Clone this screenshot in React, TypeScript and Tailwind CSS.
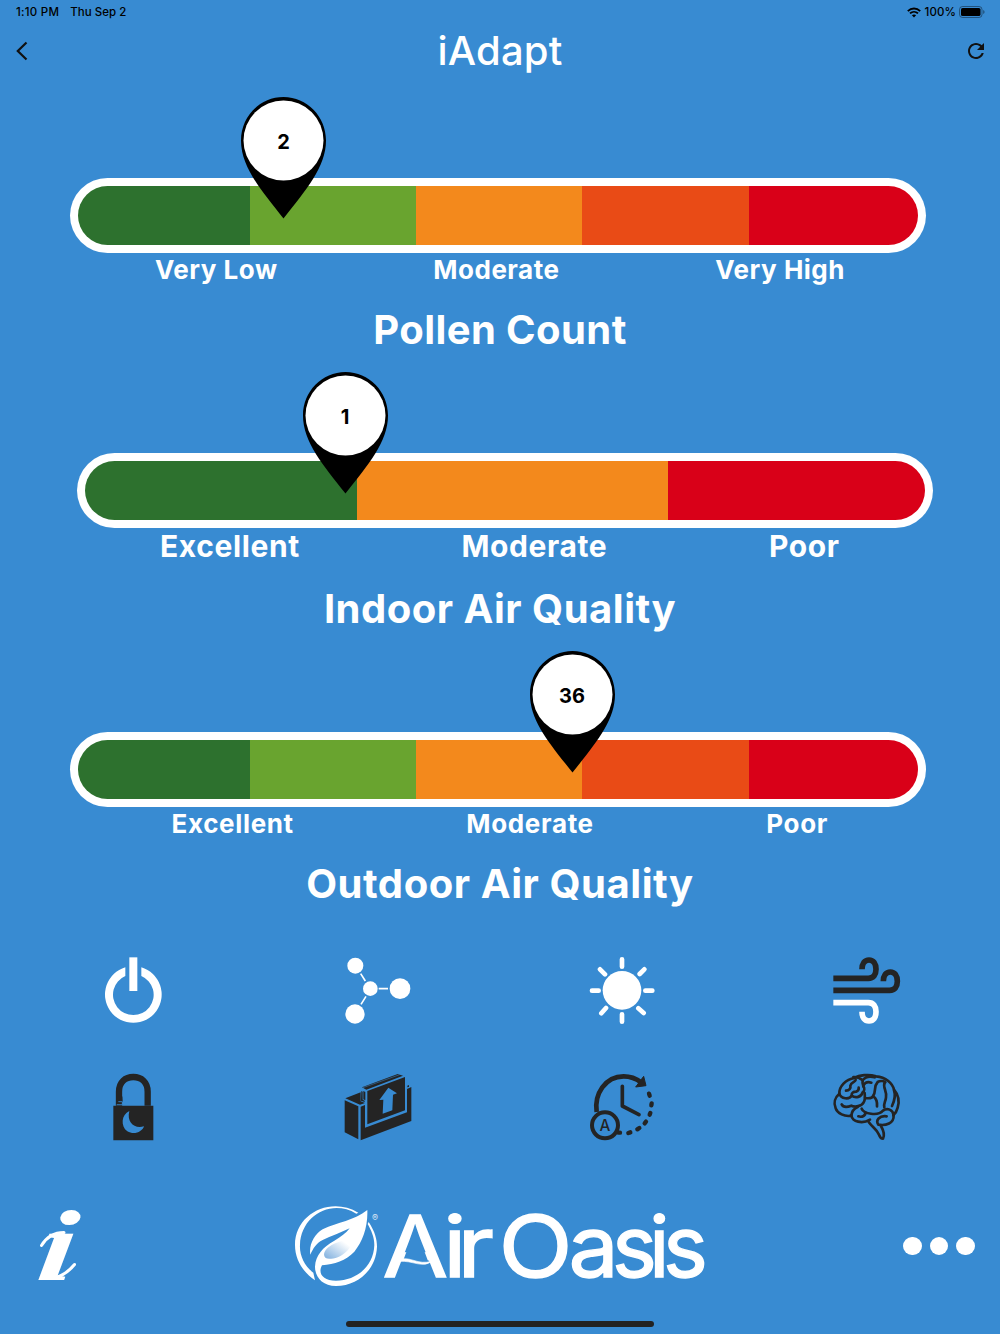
import type { ReactNode } from "react";

const gauges = [
  {
    title: "Pollen Count",
    value: 2,
    pin: "left-[171px]",
    bar: "ml-[70px]",
    labels: ["Very Low", "Moderate", "Very High"],
    labelRow: "h-8 pt-px pl-[155px] pr-[155px] text-[26px] tracking-[0.5px]",
    titleStyle: "tracking-[0.4px]",
    segments: [
      { color: "bg-[#2d712e]", width: "w-[172px]" },
      { color: "bg-[#69a42f]", width: "w-[166px]" },
      { color: "bg-[#f3891c]", width: "w-[166px]" },
      { color: "bg-[#e94b16]", width: "w-[167px]" },
      { color: "bg-[#d90018]", width: "w-[169px]" },
    ],
  },
  {
    title: "Indoor Air Quality",
    value: 1,
    pin: "left-[225.5px]",
    bar: "ml-[77px]",
    labels: ["Excellent", "Moderate", "Poor"],
    labelRow: "h-9 pt-px pl-[160px] pr-[160.5px] text-[30px] tracking-[0.6px]",
    titleStyle: "tracking-[0.5px]",
    segments: [
      { color: "bg-[#2d712e]", width: "w-[272px]" },
      { color: "bg-[#f3891c]", width: "w-[311px]" },
      { color: "bg-[#d90018]", width: "w-[257px]" },
    ],
  },
  {
    title: "Outdoor Air Quality",
    value: 36,
    pin: "left-[459.5px]",
    bar: "ml-[70px]",
    labels: ["Excellent", "Moderate", "Poor"],
    labelRow: "h-8 pl-[171.5px] pr-[172px] text-[26px] tracking-[0.65px]",
    titleStyle: "tracking-[0.55px]",
    segments: [
      { color: "bg-[#2d712e]", width: "w-[172px]" },
      { color: "bg-[#69a42f]", width: "w-[166px]" },
      { color: "bg-[#f3891c]", width: "w-[166px]" },
      { color: "bg-[#e94b16]", width: "w-[167px]" },
      { color: "bg-[#d90018]", width: "w-[169px]" },
    ],
  },
];

const Pin = ({ value, className }: { value: number; className: string }) => (
  <div className={`absolute -top-[81px] w-[85px] h-[122px] ${className}`}>
    <svg viewBox="0 0 85 122" className="absolute inset-0 w-full h-full">
      <path d="M42.5 0C19 0 0 19.5 0 43.5C0 70 20 93 42.5 121.5C65 93 85 70 85 43.5C85 19.5 66 0 42.5 0Z" fill="#000" />
      <circle cx="42.5" cy="43.5" r="40" fill="#fff" />
    </svg>
    <div className="relative h-[89px] flex items-center justify-center text-black font-bold text-[20px]">
      {value}
    </div>
  </div>
);

const Gauge = ({ gauge }: { gauge: typeof gauges[0] }) => (
  <section className="pt-[100px]">
    <div className={`relative w-[856px] h-[75px] rounded-full bg-white p-2 ${gauge.bar}`}>
      <div className="flex h-full rounded-full overflow-hidden">
        {gauge.segments.map((s) => (
          <div key={s.color} className={`h-full shrink-0 ${s.color} ${s.width}`} />
        ))}
      </div>
      <Pin value={gauge.value} className={gauge.pin} />
    </div>
    <div className={`flex items-center justify-between font-bold ${gauge.labelRow}`}>
      {gauge.labels.map((label) => (
        <span key={label}>{label}</span>
      ))}
    </div>
    <h2 className={`mt-5 h-12 leading-[49px] text-center font-bold text-[40px] ${gauge.titleStyle}`}>
      {gauge.title}
    </h2>
  </section>
);

const Icon = ({ box, children }: { box: string; children: ReactNode }) => (
  <svg viewBox={box} className="w-[90px] h-[90px]" fill="none">
    {children}
  </svg>
);

const dark = "#242424";

const PowerIcon = () => (
  <Icon box="-6 -1 270 270">
    <path d="M106 66A85 85 0 1 0 154 66V92A61 61 0 1 1 106 92Z" fill="#fff" />
    <path d="M118 36H142V137H118Z" fill="#fff" />
  </Icon>
);

const MoleculeIcon = () => (
  <Icon box="8 0 270 270">
    <g fill="#fff">
      <circle cx="75" cy="62" r="24" />
      <circle cx="120" cy="131" r="22" />
      <circle cx="209" cy="131" r="31" />
      <circle cx="74" cy="207" r="29" />
    </g>
    <path d="M91 86L105 108M145 131H173M107 154L92 178" stroke="#fff" strokeWidth="5" />
  </Icon>
);

const SunIcon = () => (
  <Icon box="6 0 270 270">
    <circle cx="141" cy="136" r="58" fill="#fff" />
    <path
      d="M141 43V65M141 208V230M51 137H71M211 137H232M75 73L90 88M208 73L194 87M93 189L79 205M190 190L206 204"
      stroke="#fff"
      strokeWidth="14"
      strokeLinecap="round"
    />
  </Icon>
);

const WindIcon = () => (
  <Icon box="5 0 270 270">
    <g strokeWidth="17">
      <path d="M39 100H144C159 100 167 90 167 73C167 55 159 45 146 45C133 45 125 55 125 73" stroke={dark} />
      <path d="M39 136H208C223 136 231 126 231 109C231 91 223 81 210 81C197 81 189 91 189 109" stroke={dark} />
      <path d="M39 173H144C159 173 167 183 167 200C167 218 159 228 146 228C133 228 125 218 125 200" stroke="#fff" />
    </g>
  </Icon>
);

const LockIcon = () => (
  <Icon box="-6 0 270 270">
    <path d="M87 122V80C87 51 106 36 130 36C154 36 173 51 173 80V122" stroke={dark} strokeWidth="19" />
    <path d="M97 94L86 109L98 112Z" fill={dark} />
    <path d="M85 110H97V119H80" stroke="#388bd2" strokeWidth="2.5" />
    <path d="M70 122H190V226H70Z" fill={dark} />
    <path d="M118 138C94 148 91 184 112 199C132 211 157 201 162 184C134 193 109 172 118 138Z" fill="#388bd2" />
  </Icon>
);

const FilterIcon = () => (
  <Icon box="728 0 270 270">
    <g fill={dark}>
      <path d="M763 106L804 124V223L763 202Z" />
      <path d="M765 100L811 82V109L824 114L809 119Z" />
      <path d="M813 78L817 80V104L823 107V111L812 107Z" />
      <path d="M819 78L825 81V106L819 103Z" />
      <path d="M811 125L824 120V188L950 142V72L963 66V168L811 226Z" />
      <path d="M831 78L944 36V136L831 178Z" />
      <path d="M815 67L922 27L938 32L828 74Z" />
      <path d="M951 62L956 60V66L951 67Z" />
    </g>
    <path d="M818 68L928 29" stroke="#388bd2" strokeWidth="1.5" />
    <path d="M894 68L920 85L908 89L906 136L877 146L879 104L867 105Z" fill="#388bd2" />
  </Icon>
);

const TimerIcon = () => (
  <Icon box="6 0 270 270">
    <path d="M65 141C57 87 91 34 146 34C166 34 184 41 198 52" stroke={dark} strokeWidth="14" />
    <path d="M206 34L213 62L182 66Z" fill={dark} stroke={dark} strokeWidth="3" strokeLinejoin="round" />
    <path d="M142 64V123L192 149" stroke={dark} strokeWidth="11" strokeLinecap="round" strokeLinejoin="round" />
    <path
      d="M222 86L224 92M230 115L229 121M226 144L224 149M213 170L209 175M193 189L187 193M166 202L160 204M135 203L131 203"
      stroke={dark}
      strokeWidth="13"
      strokeLinecap="round"
    />
    <circle cx="90" cy="181" r="39" stroke={dark} strokeWidth="12" />
    <text x="90" y="198" textAnchor="middle" fontFamily="Inter" fontSize="46" fontWeight="500" fill={dark}>
      A
    </text>
  </Icon>
);

const BrainIcon = () => (
  <Icon box="740 0 270 270">
    <g stroke={dark} strokeWidth="8" strokeLinecap="round" strokeLinejoin="round">
      <path d="M828 152C808 156 786 145 781 130C774 114 779 97 792 86C791 64 811 43 838 39C851 30 880 27 902 34C932 36 952 56 956 74C968 88 973 108 967 128C964 140 960 146 954 151" />
      <path d="M828 152C832 170 860 178 884 164" />
      <path d="M792 86C797 102 822 105 829 92C841 101 858 96 862 82C868 77 868 69 864 64C861 57 861 51 862 46" />
      <path d="M812 77C822 77 827 70 825 62C827 51 839 52 841 45M829 92C828 83 835 80 842 80C849 77 851 73 850 68" />
      <path d="M864 64C866 54 874 49 888 53M834 36C847 35 855 40 862 46C870 35 884 33 898 37" />
      <path d="M799 118C804 128 818 126 828 122C839 127 859 124 865 112C870 105 869 99 868 84M868 99C881 101 892 99 894 91C903 79 894 65 907 51C915 46 926 48 930 52" />
      <path d="M894 94C904 101 906 112 905 124M928 53C921 67 936 79 932 97C931 109 924 115 927 127" />
      <path d="M828 152C829 140 838 130 847 126M859 131C865 146 907 155 923 137C935 128 953 133 955 151C956 175 932 183 909 179C900 166 912 151 934 154" />
      <path d="M849 154C861 158 871 151 870 143M956 76C962 93 957 108 950 123" />
      <path d="M880 171C892 188 904 192 911 209C914 217 918 221 923 221C928 211 925 197 917 183" />
    </g>
  </Icon>
);

// x offsets are per letter, inside the stretched run
const wordmark = [
  { text: "A", at: "0", transform: "translate(381.5 1276.5) scale(1.12 1)" },
  { text: "ir", at: "0 12.5", transform: "translate(442 1276.5) scale(1.15 1)" },
  { text: "O", at: "0", transform: "translate(497.5 1276.5) scale(1.14 1)" },
  { text: "a", at: "0", transform: "translate(567.5 1276.5) scale(1.05 1)" },
  { text: "sis", at: "0 37 51", transform: "translate(611 1276.5)" },
];

const Logo = () => (
  <svg viewBox="290 1185 420 120" className="w-[420px] h-[120px]">
    <defs>
      <linearGradient id="leaf" x1="0" y1="1" x2="1" y2="0">
        <stop offset="0.1" stopColor="#8db8e2" />
        <stop offset="0.8" stopColor="#fff" />
      </linearGradient>
    </defs>
    <g transform="translate(20 1190) scale(.33333)" fill="#fff">
      <path d="M1012 68C930 18 822 70 822 165C822 208 845 246 882 271L877 248C850 228 835 195 837 165C840 77 930 26 1006 71Z" />
      <path d="M1043 96C1062 125 1068 148 1068 170C1065 240 1010 288 945 288C905 288 882 262 882 230C884 195 905 172 940 152C960 140 975 130 986 115C960 128 930 138 905 150C885 160 877 175 868 194C863 165 880 132 905 118C950 96 1000 92 1039 60C1041 110 1025 155 1000 185C975 212 940 222 903 226C890 250 905 272 945 272C1005 272 1058 230 1060 165C1060 140 1050 120 1040 102Z" />
      <path d="M910 198C905 178 935 157 985 148C1010 160 960 212 925 206C915 206 911 203 910 198Z" fill="url(#leaf)" />
    </g>
    <text x="371" y="1220.5" fontFamily="Inter" fontSize="9" fill="#fff" opacity="0.8">
      ®
    </text>
    <g fontFamily="Inter" fontSize="85" fontWeight="400" fill="#fff" stroke="#fff" strokeWidth="1.3">
      {wordmark.map((w) => (
        <text key={w.text} x={w.at} y="0" transform={w.transform}>
          {w.text}
        </text>
      ))}
    </g>
    {/* wave in place of the crossbar */}
    <path d="M406.5 1249H422.5L428.5 1265H400.5Z" fill="#388bd2" />
    <path d="M399 1260C408 1255 417 1266 431 1261C422 1269 411 1260 399 1261.5Z" fill="#fff" stroke="#fff" strokeWidth=".6" />
  </svg>
);

const StatusBar = () => (
  <div className="h-6 flex items-center justify-between pl-4 pr-[15px] text-[11.5px] font-medium text-black">
    <div className="flex gap-[11px] pt-[1.5px]">
      <span className="tracking-[0.25px]">1:10 PM</span>
      <span className="tracking-[0.05px]">Thu Sep 2</span>
    </div>
    <div className="flex items-center">
      <svg viewBox="0 0 14 11" className="w-[14px] h-[11px] mr-1" fill="none" stroke="#000" strokeWidth="1.9">
        <path d="M.8 4.1C4.4.7 9.6.7 13.2 4.1M3 6.4C5.3 4.3 8.7 4.3 11 6.4" />
        <path d="M7 10.5L4.9 8.3C6.1 7.3 7.9 7.3 9.1 8.3Z" fill="#000" stroke="none" />
      </svg>
      <span className="pt-[1.5px] tracking-[0.1px]">100%</span>
      <svg viewBox="0 0 26 12" className="w-[26px] h-3 ml-[3px]" fill="none">
        <rect x=".5" y=".5" width="22.5" height="11" rx="3" stroke="#000" strokeOpacity=".4" />
        <rect x="2" y="2" width="19.5" height="8" rx="1.6" fill="#000" />
        <path d="M24.3 4V8Q25.5 7.5 25.5 6T24.3 4" fill="#000" fillOpacity=".5" />
      </svg>
    </div>
  </div>
);

const Header = () => (
  <header className="h-[54px] flex items-center justify-between px-4">
    <svg viewBox="0 0 12 20" className="w-3 h-5" fill="none" stroke="#111" strokeWidth="2.2">
      <path d="M10.5 1.5L1.8 10L10.5 18.5" />
    </svg>
    <h1 className="text-[40px] font-medium tracking-[0.2px] pl-1">iAdapt</h1>
    <svg viewBox="4 4 16 16" className="w-4 h-4" fill="#111">
      <path d="M17.65 6.35C16.2 4.9 14.21 4 12 4c-4.42 0-7.99 3.58-7.99 8s3.57 8 7.99 8c3.73 0 6.84-2.55 7.73-6h-2.08c-.82 2.33-3.04 4-5.65 4-3.31 0-6-2.69-6-6s2.69-6 6-6c1.66 0 3.14.69 4.22 1.78L13 11h7V4l-2.35 2.35z" />
    </svg>
  </header>
);

const Footer = () => (
  <footer className="flex justify-between pt-[30px] pl-[30px] pr-[25.5px]">
    <svg viewBox="30 1185 68 120" className="w-[68px] h-[120px]" fill="#fff">
      <text
        transform="translate(35 1280) skewX(-8) scale(1.3 .98)"
        fontFamily="Liberation Serif"
        fontSize="103"
        fontWeight="700"
        fontStyle="italic"
      >
        i
      </text>
      {/* swashes */}
      <path
        d="M41.5 1245.5C46 1238 54 1232.5 64 1232.5M54 1278C63 1276 70 1270 74.5 1264.5"
        fill="none"
        stroke="#fff"
        strokeWidth="3"
        strokeLinecap="round"
      />
    </svg>
    <Logo />
    <div className="flex h-[122px] items-center gap-2">
      <span className="size-[18.5px] rounded-full bg-white" />
      <span className="size-[18.5px] rounded-full bg-white" />
      <span className="size-[18.5px] rounded-full bg-white" />
    </div>
  </footer>
);

const App = () => {
  return (
    <div className="w-[1000px] h-[1334px] overflow-hidden bg-[#388bd2] text-white font-['Inter',sans-serif] flex flex-col">
      <StatusBar />
      <Header />
      <main>
        {gauges.map((gauge) => (
          <Gauge key={gauge.title} gauge={gauge} />
        ))}
        <div className="grid grid-cols-4 gap-y-[30px] justify-items-center mt-[38px] mx-[11px]">
          <PowerIcon />
          <MoleculeIcon />
          <SunIcon />
          <WindIcon />
          <LockIcon />
          <FilterIcon />
          <TimerIcon />
          <BrainIcon />
        </div>
      </main>
      <Footer />
      <div className="mt-auto mb-[7.5px] mx-auto w-[308px] h-[5.5px] rounded-full bg-[#222]" />
    </div>
  );
};

export default App;
